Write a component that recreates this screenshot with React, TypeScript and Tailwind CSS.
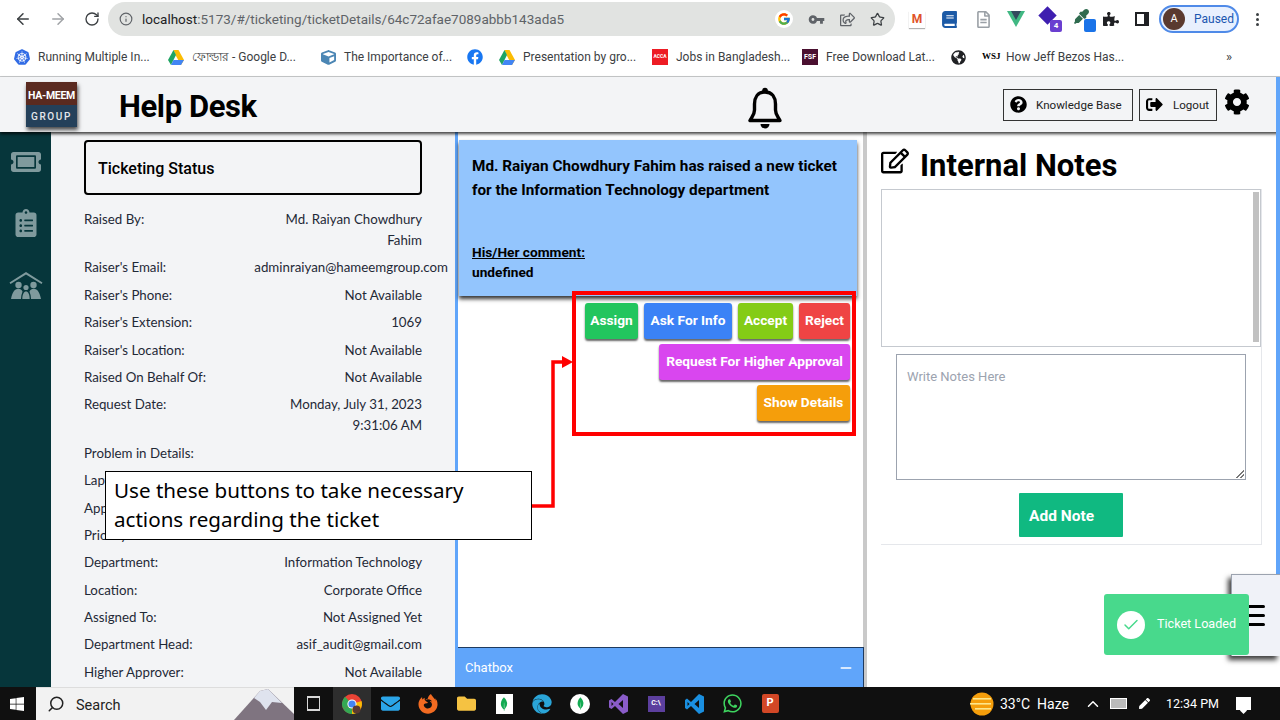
import React from 'react';
import { ArrowLeft, ArrowRight, RotateCw, Info, Star, Search, ChevronUp, Minus, Check } from 'lucide-react';
import {
    FaTicketAlt,
    FaClipboardList,
    FaCog,
    FaQuestionCircle,
    FaSignOutAlt,
    FaRegEdit,
    FaWindows,
    FaWhatsapp,
    FaFirefoxBrowser,
    FaEdge,
    FaFacebook,
    FaGlobeAmericas,
    FaPuzzlePiece,
    FaEyeDropper,
    FaBook,
    FaRegFileAlt,
    FaCube,
    FaEnvelope,
    FaFolder,
    FaPen,
    FaRegShareSquare,
} from 'react-icons/fa';
import { MdVpnKey } from 'react-icons/md';
import { FcGoogle } from 'react-icons/fc';
import { SiKubernetes, SiMongodb } from 'react-icons/si';

function Drive() {
    return (
        <svg width="16" height="15" viewBox="0 0 16 15">
            <polygon points="5.5,0 10.5,0 16,10 13,15 8,6" fill="#fbbc04" />
            <polygon points="5.5,0 8,5 3,15 0,10" fill="#1fa463" />
            <polygon points="3,15 5.5,10 16,10 13,15" fill="#4285f4" />
        </svg>
    );
}

function Chrome() {
    return (
        <svg width="20" height="20" viewBox="0 0 20 20">
            <circle cx="10" cy="10" r="10" fill="#ea4335" />
            <path d="M10 10 L1.3 15 A10 10 0 0 1 3 2.8 Z" fill="#34a853" />
            <path d="M10 10 L1.3 15 A10 10 0 0 0 18 16 Z" fill="#34a853" />
            <path d="M10 10 L19.5 7 A10 10 0 0 1 10 20 Z" fill="#fbbc04" />
            <circle cx="10" cy="10" r="4.6" fill="#fff" />
            <circle cx="10" cy="10" r="3.6" fill="#4285f4" />
            <circle cx="14.5" cy="15.5" r="4" fill="#5a3a30" />
        </svg>
    );
}

function Family() {
    return (
        <svg width="34" height="27" viewBox="0 0 33 27" fill="#7f9a9d">
            <path d="M0 10.5 L16.5 0 L33 10.5 L32 12 L16.5 2.5 L1 12 Z" />
            <circle cx="9" cy="13" r="3.2" />
            <circle cx="24" cy="13" r="3.2" />
            <circle cx="16.5" cy="15.5" r="2.6" />
            <path d="M1.5 27 C3 19 6 16.8 9 16.8 C11 16.8 12 17.8 13 19.5 C12 22 11.5 24.5 11.5 27 Z" />
            <path d="M31.5 27 C30 19 27 16.8 24 16.8 C22 16.8 21 17.8 20 19.5 C21 22 21.5 24.5 21.5 27 Z" />
            <path d="M12.8 27 C12.8 22 14.5 19.5 16.5 19.5 C18.5 19.5 20.2 22 20.2 27 Z" />
        </svg>
    );
}

function Vue() {
    return (
        <svg width="18" height="16" viewBox="0 0 18 16">
            <polygon points="0,0 18,0 9,16" fill="#41b883" />
            <polygon points="4,0 14,0 9,9" fill="#34495e" />
        </svg>
    );
}

function VisualStudio() {
    return (
        <svg width="19" height="20" viewBox="0 0 19 20">
            <path d="M14 0 L19 2.5 V17.5 L14 20 L6 12 L2.5 15 L0 13.5 V6.5 L2.5 5 L6 8 Z M14 6 L9.5 10 L14 14 Z M2.5 8 V12 L4.5 10 Z" fill="#8a5cc9" fillRule="evenodd" />
        </svg>
    );
}

function VsCode() {
    return (
        <svg width="19" height="20" viewBox="0 0 19 20">
            <path d="M14 0 L19 2.5 V17.5 L14 20 L6 12 L2 15.5 L0 14 V6 L2 4.5 L6 8 Z M14 6 L9.5 10 L14 14 Z M2.5 8 V12 L4.5 10 Z" fill="#1a8fe0" fillRule="evenodd" />
        </svg>
    );
}

function Bell() {
    return (
        <svg width="34" height="42" viewBox="0 0 34 42">
            <circle cx="17" cy="3.5" r="2.8" fill="#000" />
            <path
                d="M17 5 C9.5 5 6.5 11 6.5 17 V23 C6.5 28 4 30 2 33.5 H32 C30 30 27.5 28 27.5 23 V17 C27.5 11 24.5 5 17 5 Z"
                fill="none"
                stroke="#000"
                strokeWidth="3.4"
                strokeLinejoin="round"
            />
            <path d="M12.5 37 H21.5 A4.5 4.5 0 0 1 12.5 37 Z" fill="#000" />
        </svg>
    );
}

function Weather() {
    return (
        <svg width="25" height="24" viewBox="0 0 25 24">
            <circle cx="13" cy="12" r="11.5" fill="#f59e0b" />
            <rect x="4" y="6" width="18" height="1.6" fill="#fde68a" />
            <rect x="1" y="11" width="21" height="1.6" fill="#fde68a" />
            <rect x="6" y="16" width="16" height="1.6" fill="#fde68a" />
        </svg>
    );
}

const bookmarks = [
    { w: 'w-[154px]', text: 'Running Multiple In...', icon: <SiKubernetes className="text-[#326ce5] text-[16px]" /> },
    { w: 'w-[152px]', text: 'ফোল্ডার - Google D...', icon: <Drive /> },
    { w: 'w-[147px]', text: 'The Importance of...', icon: <FaCube className="text-[#4b86b4] text-[15px]" /> },
    { w: 'w-[32px]', text: '', icon: <FaFacebook className="text-[#1877f2] text-[16px]" /> },
    { w: 'w-[153px]', text: 'Presentation by gro...', icon: <Drive /> },
    {
        w: 'w-[150px]',
        text: 'Jobs in Bangladesh...',
        icon: <span className="flex h-[16px] w-[16px] items-center justify-center bg-[#ed1c24] text-[5px] font-bold text-white">ACCA</span>,
    },
    {
        w: 'w-[148px]',
        text: 'Free Download Lat...',
        icon: <span className="flex h-[16px] w-[16px] items-center justify-center bg-[#4a1030] text-[7px] font-bold text-white">FSF</span>,
    },
    { w: 'w-[32px]', text: '', icon: <FaGlobeAmericas className="text-[#202124] text-[15px]" /> },
    {
        w: 'w-[150px]',
        text: 'How Jeff Bezos Has...',
        icon: <span className="w-[16px] font-['Liberation_Serif',serif] text-[9px] font-bold text-black">WSJ</span>,
    },
];

const details = [
    ['Raised By:', 'Md. Raiyan Chowdhury Fahim'],
    ["Raiser's Email:", 'adminraiyan@hameemgroup.com'],
    ["Raiser's Phone:", 'Not Available'],
    ["Raiser's Extension:", '1069'],
    ["Raiser's Location:", 'Not Available'],
    ['Raised On Behalf Of:', 'Not Available'],
    ['Request Date:', 'Monday, July 31, 2023 9:31:06 AM'],
    ['Problem in Details:', ''],
    ['Laptop Problem:', ''],
    ['Application:', ''],
    ['Priority:', ''],
    ['Department:', 'Information Technology'],
    ['Location:', 'Corporate Office'],
    ['Assigned To:', 'Not Assigned Yet'],
    ['Department Head:', 'asif_audit@gmail.com'],
    ['Higher Approver:', 'Not Available'],
];

const taskbarIcons = [
    { icon: <Chrome />, active: true },
    { icon: <FaEnvelope className="text-[#2ba5e8] text-[19px]" /> },
    { icon: <FaFirefoxBrowser className="text-[#f26b21] text-[20px]" /> },
    { icon: <FaFolder className="text-[#f5c242] text-[19px]" /> },
    {
        icon: (
            <span className="flex h-[20px] w-[17px] items-center justify-center bg-white">
                <SiMongodb className="text-[#13aa52] text-[14px]" />
            </span>
        ),
    },
    { icon: <FaEdge className="text-[#2aa5d8] text-[20px]" /> },
    {
        icon: (
            <span className="flex h-[20px] w-[20px] items-center justify-center rounded-full bg-white">
                <SiMongodb className="text-[#13aa52] text-[13px]" />
            </span>
        ),
    },
    { icon: <VisualStudio /> },
    {
        icon: (
            <span className="flex h-[16px] w-[17px] items-center justify-center bg-[#5c3f9e] text-[7px] font-bold text-white">C:\</span>
        ),
    },
    { icon: <VsCode /> },
    { icon: <FaWhatsapp className="text-[#3ed45f] text-[21px]" /> },
    {
        icon: (
            <span className="flex h-[19px] w-[17px] items-center justify-center rounded-[2px] bg-[#d24726] text-[11px] font-bold text-white">P</span>
        ),
    },
];

function ActionButton({ className, children }: { className: string; children: React.ReactNode }) {
    return (
        <button className={`h-[36px] whitespace-nowrap rounded-[3px] pb-[2px] text-[13.7px] font-bold text-white shadow-[0_2px_2px_rgba(0,0,0,0.6)] ${className}`}>
            {children}
        </button>
    );
}

export default function App() {
    return (
        <div className="relative flex h-[720px] w-[1280px] flex-col overflow-hidden bg-white font-['Roboto',sans-serif] text-black">
            {/* browser toolbar */}
            <div className="flex h-[38px] items-center bg-white">
                <div className="flex w-[108px] items-center gap-[17px] pl-[14px]">
                    <ArrowLeft size={18} className="text-[#3c4043]" />
                    <ArrowRight size={18} className="text-[#a0a3a6]" />
                    <RotateCw size={16} className="text-[#3c4043]" />
                </div>
                <div className="flex h-[34px] w-[787px] items-center rounded-full bg-[#e1e3e1] pl-[11px] pr-[10px]">
                    <Info size={14} className="text-[#5f6368]" />
                    <span className="ml-[9px] text-[13.5px] text-[#5f6368]">
                        <span className="text-[#202124]">localhost</span>:5173/#/ticketing/ticketDetails/64c72afae7089abbb143ada5
                    </span>
                    <span className="ml-auto flex items-center gap-[15px] text-[#5f6368]">
                        <span className="flex h-[18px] w-[18px] items-center justify-center rounded-full bg-white">
                            <FcGoogle size={14} />
                        </span>
                        <MdVpnKey size={17} />
                        <FaRegShareSquare size={15} />
                        <Star size={15} className="text-[#3c4043]" />
                    </span>
                </div>
                <div className="flex flex-1 items-center pl-[14px]">
                    <span className="flex h-[17px] w-[16px] items-center justify-center bg-white text-[12px] font-bold text-[#e0532a] shadow-[0_1px_1px_rgba(0,0,0,0.3)]">M</span>
                    <FaBook className="ml-[16px] text-[#1c5aa6] text-[17px]" />
                    <FaRegFileAlt className="ml-[17px] text-[#9aa0a6] text-[17px]" />
                    <span className="ml-[15px]"><Vue /></span>
                    <span className="relative ml-[15px] h-[20px] w-[20px]">
                        <span className="absolute left-[1px] top-0 h-[13px] w-[13px] rotate-45 bg-[#3f1fb0]" />
                        <span className="absolute bottom-[-3px] right-[-2px] flex h-[12px] w-[12px] items-center justify-center rounded-[2px] bg-[#6a3fd0] text-[8px] font-bold text-white">4</span>
                    </span>
                    <span className="relative ml-[14px] h-[20px] w-[20px]">
                        <FaEyeDropper className="absolute left-0 top-0 text-[#2f6b4f] text-[15px]" />
                        <span className="absolute bottom-[-3px] right-[-2px] h-[13px] w-[12px] rounded-[2px] bg-[#1a73e8]" />
                    </span>
                    <FaPuzzlePiece className="ml-[9px] text-[#202124] text-[16px]" />
                    <span className="ml-[16px] h-[14px] w-[14px] border-2 border-r-[5px] border-[#202124]" />
                    <span className="ml-[10px] flex h-[28px] w-[80px] items-center rounded-full border-2 border-[#4f8ae8] bg-[#e8f0fe] pl-[2px]">
                        <span className="flex h-[22px] w-[22px] items-center justify-center rounded-full bg-[#5a3a30] text-[11px] text-white">A</span>
                        <span className="ml-[9px] text-[12px] text-[#1a56b0]">Paused</span>
                    </span>
                    <span className="ml-[17px] flex flex-col gap-[2px]">
                        <span className="h-[3px] w-[3px] rounded-full bg-[#3c4043]" />
                        <span className="h-[3px] w-[3px] rounded-full bg-[#3c4043]" />
                        <span className="h-[3px] w-[3px] rounded-full bg-[#3c4043]" />
                    </span>
                </div>
            </div>

            {/* bookmarks */}
            <div className="flex h-[39px] items-center border-b border-[#c9cbcd] bg-white pl-[14px]">
                {bookmarks.map((b, i) => (
                    <div key={i} className={`flex shrink-0 items-center gap-[8px] ${b.w}`}>
                        <span className="flex w-[16px] justify-center">{b.icon}</span>
                        {b.text && <span className="whitespace-nowrap text-[12px] text-[#3c4043]">{b.text}</span>}
                    </div>
                ))}
                <span className="ml-[94px] text-[13px] text-[#3c4043]">»</span>
            </div>

            {/* app header */}
            <header className="relative z-10 flex h-[55px] items-center bg-[#f3f4f6] shadow-[0_2px_3px_rgba(0,0,0,0.75)]">
                <div className="ml-[26px] flex h-[45px] w-[51px] flex-col shadow-[1px_3px_4px_rgba(0,0,0,0.7)]">
                    <div className="flex h-[23px] items-center justify-center whitespace-nowrap bg-[#5a2a20] pt-[5px] text-[10.5px] font-bold tracking-[-0.3px] text-white">HA-MEEM</div>
                    <div className="flex h-[22px] items-center justify-center bg-[#24405a] text-[10px] font-medium tracking-[1.6px] text-[#e5e7eb]">GROUP</div>
                </div>
                <h1 className="ml-[42px] mt-[5px] w-[140px] shrink-0 whitespace-nowrap text-[31px] font-bold tracking-[-0.4px]">Help Desk</h1>
                <span className="ml-[489px] mt-[6px] shrink-0"><Bell /></span>
                <button className="ml-[221px] flex h-[32px] w-[130px] shrink-0 items-center border border-[#333] pl-[6px] text-[11.6px] text-[#222]">
                    <FaQuestionCircle size={17} className="text-black" />
                    <span className="ml-[9px] mt-[2px]">Knowledge Base</span>
                </button>
                <button className="ml-[6px] flex h-[32px] w-[78px] shrink-0 items-center border border-[#333] pl-[6px] text-[11.6px] text-[#222]">
                    <FaSignOutAlt size={17} className="text-black" />
                    <span className="ml-[10px] mt-[2px]">Logout</span>
                </button>
                <FaCog className="ml-[7px] mb-[6px] shrink-0 text-[26px]" />
            </header>

            {/* main area */}
            <main className="flex h-[555px]">
                <aside className="flex w-[51px] shrink-0 flex-col items-center bg-[#06363b] pt-[15px]">
                    <FaTicketAlt className="text-[#7f9a9d] text-[30px]" />
                    <FaClipboardList className="mt-[32px] text-[#7f9a9d] text-[28px]" />
                    <span className="mt-[35px]"><Family /></span>
                </aside>

                <section className="w-[404px] shrink-0 overflow-hidden bg-[#f3f4f6] pl-[33px] pt-[8px]">
                    <div className="flex h-[55px] w-[338px] items-center rounded-[4px] border-2 border-black pl-[12px] pt-[3px] text-[16px] font-medium">
                        Ticketing Status
                    </div>
                    <div className="mt-[14px] w-[338px] font-['Lato',sans-serif] text-[13.3px] leading-[21px] text-[#1f2937]">
                        {details.map(([label, value]) => (
                            <div key={label} className="mb-[6.4px] flex justify-between">
                                <span className="shrink-0 whitespace-nowrap">{label}</span>
                                <span className={value.startsWith('adminraiyan') ? 'whitespace-nowrap text-right -mr-[26px]' : 'w-[150px] text-right'}>{value}</span>
                            </div>
                        ))}
                    </div>
                </section>

                <section className="flex w-[412px] shrink-0 flex-col border-l-[3px] border-r-4 border-l-[#60a5fa] border-r-[#c9c9c9] bg-white">
                    <div className="ml-[1px] mt-[8px] h-[156px] w-[398px] bg-[#93c5fd] px-[13px] pt-[14px] text-[15.3px] font-bold leading-[24px] shadow-[0_3px_4px_rgba(0,0,0,0.8)]">
                        <p>Md. Raiyan Chowdhury Fahim has raised a new ticket for the Information Technology department</p>
                        <p className="mt-[40px] text-[13.7px] leading-[20px] underline">His/Her comment:</p>
                        <p className="text-[13.7px] leading-[20px]">undefined</p>
                    </div>
                    <div className="mr-[13px] mt-[7px] flex flex-col items-end gap-[5px]">
                        <div className="flex gap-[6px]">
                            <ActionButton className="w-[53px] bg-[#22c55e]">Assign</ActionButton>
                            <ActionButton className="w-[88px] bg-[#3b82f6]">Ask For Info</ActionButton>
                            <ActionButton className="w-[55px] bg-[#84cc16]">Accept</ActionButton>
                            <ActionButton className="w-[51px] bg-[#ef4444]">Reject</ActionButton>
                        </div>
                        <ActionButton className="w-[191px] bg-[#d946ef]">Request For Higher Approval</ActionButton>
                        <ActionButton className="w-[93px] bg-[#f59e0b]">Show Details</ActionButton>
                    </div>
                    <div className="-mr-[1px] mt-auto flex h-[40px] items-center justify-between border-r border-t border-[#1e3a5f] bg-[#60a5fa] pl-[7px] pr-[9px] text-[13px] text-white">
                        <span className="mt-[1px]">Chatbox</span>
                        <Minus size={16} strokeWidth={2.5} />
                    </div>
                </section>

                <section className="flex-1 bg-white pl-[14px] pt-[13px]">
                    <div className="flex h-[44px] items-center">
                        <FaRegEdit className="mb-[12px] shrink-0 text-[28px]" />
                        <h2 className="mb-[2px] ml-[11px] whitespace-nowrap text-[31px] font-bold">Internal Notes</h2>
                    </div>
                    <div className="flex h-[356px] w-[381px] flex-col items-center border-b border-r border-[#e5e7eb]">
                        <div className="flex h-[158px] w-full shrink-0 justify-end border border-[#c5c9cf] bg-white pr-[1px]">
                            <span className="mt-[2px] h-[150px] w-[6px] bg-[#c1c1c1]" />
                        </div>
                        <div className="relative mt-[7px] h-[126px] w-[350px] shrink-0 border border-[#9ca3af] px-[10px] py-[12px] text-[13px] text-[#9ca3af]">
                            Write Notes Here
                            <span className="absolute bottom-[1px] right-[1px] h-[8px] w-[8px] bg-[linear-gradient(135deg,transparent_50%,#777_50%,#777_60%,transparent_60%,transparent_75%,#777_75%,#777_85%,transparent_85%)]" />
                        </div>
                        <button className="mt-[13px] h-[44px] w-[104px] shrink-0 rounded-[1px] bg-[#10b981] pl-[10px] pt-[3px] text-left text-[15.5px] font-bold text-white">
                            Add Note
                        </button>
                    </div>
                </section>
            </main>

            {/* windows taskbar */}
            <footer className="flex h-[33px] flex-1 items-center bg-[#101010] text-white">
                <FaWindows className="ml-[9px] text-[16px]" />
                <div className="relative ml-[11px] flex h-[33px] w-[258px] items-center overflow-hidden border-t border-[#ddd] bg-[#f2f2f2] pl-[11px] text-[#222]">
                    <Search size={18} className="-scale-x-100" />
                    <span className="ml-[11px] mt-[3px] text-[14.5px]">Search</span>
                    <svg className="absolute bottom-0 right-0" width="60" height="32" viewBox="0 0 60 32">
                        <polygon points="0,32 26,3 34,1 60,26 60,32" fill="#7f7480" />
                        <polygon points="20,10 26,3 34,1 48,15 38,14 32,22 26,14" fill="#dfe3ee" />
                    </svg>
                </div>
                <div className="flex w-[39px] justify-center text-[#d8d8d8]">
                    <span className="h-[15px] w-[13px] border-x border-y-2 border-[#d8d8d8]" />
                </div>
                {taskbarIcons.map((t, i) => (
                    <div
                        key={i}
                        className={`flex h-[33px] w-[38px] shrink-0 items-center justify-center ${t.active ? 'bg-[#2e2e2e]' : ''}`}
                    >
                        {t.icon}
                    </div>
                ))}
                <span className="ml-[180px] shrink-0"><Weather /></span>
                <span className="ml-[6px] mt-[2px] w-[75px] whitespace-nowrap text-[14px]">33°C&nbsp; Haze</span>
                <ChevronUp size={18} className="ml-[9px] shrink-0" />
                <span className="ml-[8px] h-[11px] w-[17px] shrink-0 border border-white bg-[#bbb]" />
                <FaPen className="ml-[12px] shrink-0 text-[11px]" />
                <span className="ml-[16px] mt-[2px] w-[51px] whitespace-nowrap text-[12.5px]">12:34 PM</span>
                <span className="relative ml-[19px] h-[13px] w-[15px] shrink-0 bg-white">
                    <span className="absolute left-[5px] top-[11px] h-[5px] w-[5px] rotate-45 bg-white" />
                </span>
            </footer>

            {/* page scrollbar */}
            <div className="absolute right-0 top-[77px] z-20 h-[561px] w-[4px] bg-[#60a5fa]" />

            {/* floating menu button + toast */}
            <div className="absolute left-[1231px] top-[574px] z-20 flex h-[82px] w-[49px] items-center justify-end border-l border-t border-[#9ca3af] bg-[#f0f2f8] pr-[15px] shadow-[-3px_4px_5px_rgba(0,0,0,0.75)]">
                <div className="flex flex-col gap-[6px]">
                    <span className="h-[3px] w-[20px] rounded-full bg-black" />
                    <span className="h-[3px] w-[20px] rounded-full bg-black" />
                    <span className="h-[3px] w-[20px] rounded-full bg-black" />
                </div>
            </div>
            <div className="absolute left-[1104px] top-[594px] z-30 flex h-[61px] w-[145px] items-center rounded-[3px] bg-[#48d98c] pl-[13px] text-white">
                <span className="flex h-[28px] w-[28px] items-center justify-center rounded-full bg-white">
                    <Check size={18} className="text-[#48d98c]" />
                </span>
                <span className="ml-[12px] whitespace-nowrap text-[12.6px]">Ticket Loaded</span>
            </div>

            {/* screenshot annotation */}
            <div className="absolute left-[105px] top-[471px] z-30 h-[69px] w-[427px] border border-black bg-white pl-[8px] pr-[50px] pt-[4px] font-['Noto_Sans',sans-serif] text-[20.6px] leading-[29px]">
                Use these buttons to take necessary actions regarding the ticket
            </div>
            <div className="absolute left-[572px] top-[291px] z-30 h-[145px] w-[284px] border-4 border-[#ff0000]" />
            <svg className="absolute left-[530px] top-[350px] z-30" width="44" height="160" viewBox="0 0 44 160">
                <path d="M2 156 H23 V12 H33" fill="none" stroke="#ff0000" strokeWidth="3.5" />
                <polygon points="32,6 43,12 32,18" fill="#ff0000" />
            </svg>
        </div>
    );
}
